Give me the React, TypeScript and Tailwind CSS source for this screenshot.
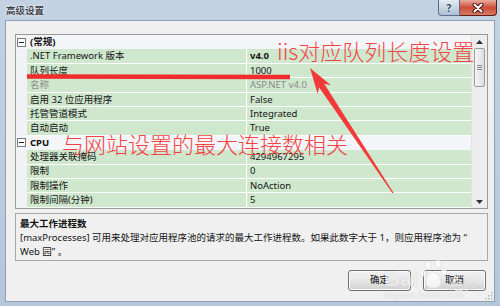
import React from "react";

type Item = { name: string; value: string; bold?: boolean; gray?: boolean };

const general: Item[] = [
  { name: ".NET Framework 版本", value: "v4.0", bold: true },
  { name: "队列长度", value: "1000" },
  { name: "名称", value: "ASP.NET v4.0", gray: true },
  { name: "启用 32 位应用程序", value: "False" },
  { name: "托管管道模式", value: "Integrated" },
  { name: "自动启动", value: "True" },
];

const cpu: Item[] = [
  { name: "处理器关联掩码", value: "4294967295" },
  { name: "限制", value: "0" },
  { name: "限制操作", value: "NoAction" },
  { name: "限制间隔(分钟)", value: "5" },
];

function MinusBox() {
  return (
    <svg width="9" height="9" viewBox="0 0 9 9">
      <rect x="0.5" y="0.5" width="8" height="8" fill="#fff" stroke="#7a7a7a" />
      <line x1="2" y1="4.5" x2="7" y2="4.5" stroke="#222" strokeWidth="1" />
    </svg>
  );
}

function Category({ label }: { label: string }) {
  return (
    <div className="flex h-[14.4px] shrink-0 items-center bg-[#f3f5f9]">
      <div className="flex w-[11px] justify-center">
        <MinusBox />
      </div>
      <span className="pl-[3px] font-bold leading-none text-[#111]">{label}</span>
    </div>
  );
}

function Row({ item }: { item: Item }) {
  const color = item.gray ? "text-[#8c8c8c]" : "text-[#151515]";
  return (
    <div className="flex h-[14.4px] shrink-0">
      <div className="w-[11px] bg-[#f0f2f6]" />
      <div
        className={`flex w-[219px] items-center border-b border-white bg-[#cee7cd] pl-[3px] leading-none ${color}`}
      >
        {item.name}
      </div>
      <div className="w-px bg-white" />
      <div
        className={`flex flex-1 items-center border-b border-white bg-[#cee7cd] pl-[3px] leading-none ${color} ${
          item.bold ? "font-bold" : ""
        }`}
      >
        {item.value}
      </div>
    </div>
  );
}

function Scrollbar() {
  return (
    <div className="flex w-[16px] flex-col border-l border-[#e2e2e2] bg-[#ededed]">
      <div className="flex h-[13px] items-center justify-center">
        <svg width="7" height="4" viewBox="0 0 7 4">
          <polygon points="3.5,0 7,4 0,4" fill="#333" />
        </svg>
      </div>
      <div className="mx-[2px] flex h-[39px] flex-col items-center justify-center gap-[1px] rounded-[2px] border border-[#9c9c9c] bg-gradient-to-r from-[#f6f6f6] to-[#dcdcdc]">
        <div className="h-px w-[5px] bg-[#8a8a8a]" />
        <div className="h-px w-[5px] bg-[#8a8a8a]" />
        <div className="h-px w-[5px] bg-[#8a8a8a]" />
      </div>
      <div className="flex-1" />
      <div className="flex h-[13px] items-center justify-center">
        <svg width="7" height="4" viewBox="0 0 7 4">
          <polygon points="0,0 7,0 3.5,4" fill="#333" />
        </svg>
      </div>
    </div>
  );
}

function Win7Button({ label }: { label: string }) {
  return (
    <div className="flex h-[21px] w-[63px] items-center justify-center rounded-[3px] border border-[#707070] bg-gradient-to-b from-[#f2f2f2] via-[#e6e6e6] to-[#d0d0d0] text-[#111] shadow-[inset_0_0_0_1px_#fcfcfc]">
      {label}
    </div>
  );
}

export default function App() {
  return (
    <div className="relative h-[306px] w-[500px] overflow-hidden bg-gradient-to-b from-[#c2d2e3] via-[#bccddf] to-[#b4c6da] font-['Noto_Sans','Noto_Sans_CJK_SC',sans-serif] text-[9.5px]">
      {/* Title bar */}
      <div className="flex h-[20px] items-start">
        <div className="pl-[6px] pt-[6px] leading-none text-[#111] [text-shadow:0_0_4px_#ffffff]">
          高级设置
        </div>
        <div className="ml-auto mr-[3px] flex">
          <div className="flex h-[16px] w-[22px] items-center justify-center rounded-bl-[4px] border border-t-0 border-[#5d6f86] bg-gradient-to-b from-[#e4ecf4] via-[#c9d6e4] to-[#aebfd3] text-[10px] font-bold leading-none text-[#33455c] [text-shadow:0_0_2px_#ffffff]">
            ?
          </div>
          <div className="flex h-[16px] w-[37px] items-center justify-center rounded-br-[4px] border border-l-0 border-t-0 border-[#5c1f1a] bg-gradient-to-b from-[#e9ab9d] via-[#c94d39] to-[#d77863]">
            <svg width="12" height="10" viewBox="0 0 12 10">
              <path d="M2.5 1.5 L9.5 8.5 M9.5 1.5 L2.5 8.5" stroke="#4a1410" strokeWidth="4" strokeLinecap="round" />
              <path d="M2.5 1.5 L9.5 8.5 M9.5 1.5 L2.5 8.5" stroke="#ffffff" strokeWidth="2" strokeLinecap="round" />
            </svg>
          </div>
        </div>
      </div>

      {/* Client area */}
      <div className="ml-[5px] flex h-[282px] w-[490px] flex-col border border-[#8ea0b5] bg-[#f0f0f0] pl-[9px] pt-[13px]">
        {/* Property grid */}
        <div className="flex h-[175px] w-[473px] border border-[#9a9a9a] bg-[#f3f5f9]">
          <div className="flex flex-1 flex-col overflow-hidden">
            <Category label="(常规)" />
            {general.map((it) => (
              <Row key={it.name} item={it} />
            ))}
            <Category label="CPU" />
            {cpu.map((it) => (
              <Row key={it.name} item={it} />
            ))}
          </div>
          <Scrollbar />
        </div>

        {/* Description */}
        <div className="mt-[4px] h-[48px] w-[473px] border border-[#a8a8a8] bg-[#f0f0f0] pl-[4px] pt-[3px] leading-[14px] text-[#151515]">
          <div className="font-bold">最大工作进程数</div>
          <div>[maxProcesses] 可用来处理对应用程序池的请求的最大工作进程数。如果此数字大于 1，则应用程序池为 “</div>
          <div>Web 园” 。</div>
        </div>

        {/* Buttons */}
        <div className="mt-[9px] flex w-[473px] justify-end gap-[12px] pr-[2px]">
          <Win7Button label="确定" />
          <Win7Button label="取消" />
        </div>

        {/* resize grip */}
        <div className="mt-auto flex justify-end pb-[1px] pr-[1px]">
          <svg width="8" height="8" viewBox="0 0 8 8">
            <rect x="6" y="0" width="1.5" height="1.5" fill="#b7b7b7" />
            <rect x="3" y="3" width="1.5" height="1.5" fill="#b7b7b7" />
            <rect x="6" y="3" width="1.5" height="1.5" fill="#b7b7b7" />
            <rect x="0" y="6" width="1.5" height="1.5" fill="#b7b7b7" />
            <rect x="3" y="6" width="1.5" height="1.5" fill="#b7b7b7" />
            <rect x="6" y="6" width="1.5" height="1.5" fill="#b7b7b7" />
          </svg>
        </div>
      </div>

      {/* Baidu watermark */}
      <div className="pointer-events-none absolute left-[384px] top-[258px] text-white/70 [text-shadow:0_0_1px_rgba(0,0,0,0.18)]">
        <div className="flex items-end">
          <span className="font-['Liberation_Sans',sans-serif] text-[22px] font-bold leading-none">Bai</span>
          <svg width="30" height="32" viewBox="0 0 30 32" className="mx-[1px] opacity-70">
            <g fill="#ffffff" stroke="#d2d2d2" strokeWidth="0.7">
              <ellipse cx="9" cy="7" rx="3" ry="4" />
              <ellipse cx="19" cy="6" rx="3" ry="4" />
              <ellipse cx="4" cy="15" rx="3" ry="3.5" />
              <ellipse cx="25" cy="14" rx="3" ry="3.5" />
              <path d="M14 14 C 8 14, 5 24, 8 28 C 11 31, 18 31, 21 28 C 24 24, 20 14, 14 14 Z" />
            </g>
          </svg>
          <span className="font-['Noto_Sans_CJK_SC',sans-serif] text-[13px] leading-none">经验</span>
        </div>
        <div className="mt-[1px] font-['Liberation_Sans',sans-serif] text-[9px] leading-none tracking-[0.5px]">
          jingyan.baidu.com
        </div>
      </div>

      {/* Red annotations */}
      <svg className="pointer-events-none absolute left-0 top-0" width="500" height="306" viewBox="0 0 500 306">
        <line x1="27" y1="76.5" x2="290" y2="77" stroke="#f02c2c" strokeWidth="4.5" />
        <polygon
          points="310,68 331,85.3 324.2,83.8 393.5,192.7 392.5,193.3 319,87.2 317.7,94.1"
          fill="#f23a3a"
        />
      </svg>
      <div className="pointer-events-none absolute left-[277px] top-[39px] whitespace-nowrap font-['Noto_Sans_CJK_SC',sans-serif] text-[22px] font-light leading-[22px] text-[#f24444]">
        iis对应队列长度设置
      </div>
      <div className="pointer-events-none absolute left-[62px] top-[132px] whitespace-nowrap font-['Noto_Sans_CJK_SC',sans-serif] text-[22px] font-light leading-[22px] text-[#f24444]">
        与网站设置的最大连接数相关
      </div>
    </div>
  );
}
